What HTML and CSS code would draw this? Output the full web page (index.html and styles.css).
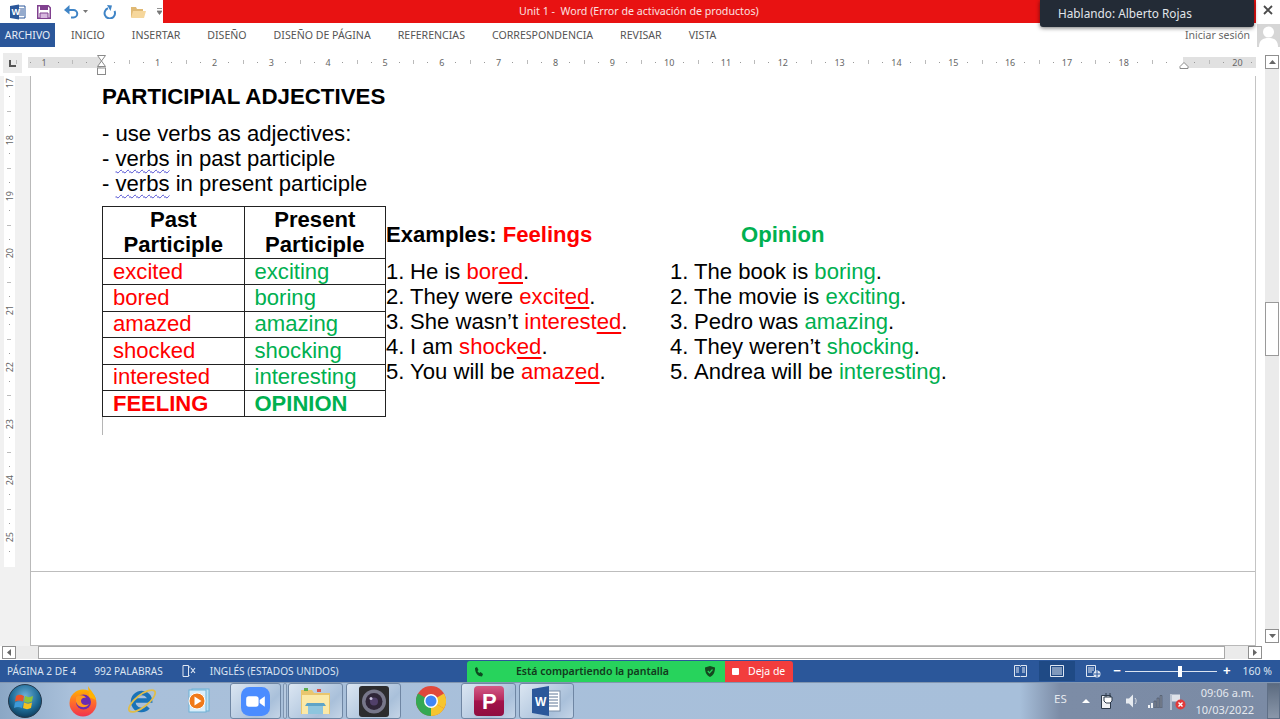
FILE: index.html
```html
<!DOCTYPE html>
<html lang="es">
<head>
<meta charset="utf-8">
<title>Unit 1 - Word</title>
<link rel="stylesheet" href="styles.css">
</head>
<body>
<div class="app">
  <header class="titlebar">
    <div class="qat">
      <svg class="qi q-word" width="16" height="16" viewBox="0 0 16 16"><path d="M7 2h8v12H7z" fill="#fff" stroke="#2b579a"/><path d="M9 5h5M9 7h5M9 9h5M9 11h5" stroke="#2b579a"/><path d="M0 2l9-1.500v15L0 14z" fill="#2b579a"/><text x="1.500" y="11" class="ico-w">W</text></svg>
      <svg class="qi q-save" width="14" height="14" viewBox="0 0 14 14"><path d="M.75.750h10.500l2 2v10.500H.75z" fill="#fff" stroke="#80408f" stroke-width="1.500"/><path d="M3 1v4h8V1z" fill="#80408f"/><path d="M3 8h8v5.500H3z" fill="#d7b8de" stroke="#80408f"/></svg>
      <svg class="qi q-undo" width="15" height="14" viewBox="0 0 15 14"><path d="M3 5h6.500a3.700 3.700 0 0 1 0 7.500H7" fill="none" stroke="#3f84c6" stroke-width="2"/><path d="M5.500 0v9.500L0 5z" fill="#3f84c6"/></svg>
      <svg class="qi q-drop" width="5" height="3" viewBox="0 0 5 3"><path d="M0 0h5L2.500 3z" fill="#777"/></svg>
      <svg class="qi q-redo" width="14" height="14" viewBox="0 0 14 14"><path d="M5 3.300A5.200 5.200 0 1 0 11.500 6" fill="none" stroke="#3f84c6" stroke-width="2"/><path d="M4 0l5 .5-1.500 5.500z" fill="#3f84c6"/></svg>
      <svg class="qi q-folder" width="16" height="14" viewBox="0 0 16 14"><path d="M1 2h5l1 2h6v8H1z" fill="#e0b974"/><path d="M3 6h13l-2 7H1z" fill="#f6d79c"/></svg>
      <svg class="qi q-custom" width="5" height="7" viewBox="0 0 5 7"><path d="M0 .5h5M0 3h5L2.500 6.500 0 3" fill="#777" stroke="#777" stroke-width=".8"/></svg>
    </div>
    <div class="redband"><span class="wintitle">Unit 1 -&nbsp; Word (Error de activación de productos)</span></div>
    <div class="closebox"><svg width="10" height="10" viewBox="0 0 10 10"><path d="M1 1l8 8M9 1l-8 8" stroke="#4a4a4a" stroke-width="1.800"/></svg></div>
  </header>

  <div class="speaker">Hablando: Alberto Rojas</div>

  <nav class="tabs">
    <span class="tab-file">ARCHIVO</span>
    <div class="tablist">
      <span>INICIO</span><span>INSERTAR</span><span>DISEÑO</span><span>DISEÑO DE PÁGINA</span><span>REFERENCIAS</span><span>CORRESPONDENCIA</span><span>REVISAR</span><span>VISTA</span>
    </div>
    <span class="signin">Iniciar sesión</span>
    <svg class="avatar" width="23" height="23" viewBox="0 0 23 23"><rect width="23" height="23" fill="#d6d6d6"/><circle cx="11.500" cy="8" r="5.500" fill="#fff"/><path d="M2 23c0-7 4-9 9.500-9s9.500 2 9.500 9z" fill="#fff"/></svg>
  </nav>

  <div class="work">
    <div class="workleft">
      <div class="rulerrow">
        <div class="corner"><svg width="7" height="7" viewBox="0 0 7 7"><path d="M1 0v6h6" fill="none" stroke="#555" stroke-width="2"/></svg></div>
        <div class="hruler">
          <div class="hcells">
            <span>1</span><span></span><span>1</span><span>2</span><span>3</span><span>4</span><span>5</span><span>6</span><span>7</span><span>8</span><span>9</span><span>10</span><span>11</span><span>12</span><span>13</span><span>14</span><span>15</span><span>16</span><span>17</span><span>18</span><span></span><span>20</span>
          </div>
          <svg class="indent" width="10" height="20" viewBox="0 0 10 20"><path d="M.5.500h8L4.500 6zM4.500 6l4 5.500h-8z" fill="#fff" stroke="#8a8a8a"/><rect x=".5" y="13" width="8" height="6.500" fill="#fff" stroke="#8a8a8a"/></svg>
          <svg class="rindent" width="10" height="7" viewBox="0 0 10 7"><path d="M5 .5l4 4v2H1v-2z" fill="#fff" stroke="#8a8a8a"/></svg>
        </div>
      </div>
      <div class="docrow">
        <div class="vcol">
          <div class="vruler">
            <span><b>17</b></span><span><b>18</b></span><span><b>19</b></span><span><b>20</b></span><span><b>21</b></span><span><b>22</b></span><span><b>23</b></span><span><b>24</b></span><span><b>25</b></span>
          </div>
        </div>
        <main class="doc">
          <section class="page">
            <h1 class="doc-title">PARTICIPIAL ADJECTIVES</h1>
            <ul class="intro">
              <li>- use verbs as adjectives:</li>
              <li>- <span class="spell">verbs</span> in past participle</li>
              <li>- <span class="spell">verbs</span> in present participle</li>
            </ul>
            <div class="lesson">
              <div class="tablewrap">
                <table class="ptable">
                  <tr class="thead"><th>Past<br>Participle</th><th>Present<br>Participle</th></tr>
                  <tr><td class="red">excited</td><td class="green">exciting</td></tr>
                  <tr><td class="red">bored</td><td class="green">boring</td></tr>
                  <tr><td class="red">amazed</td><td class="green">amazing</td></tr>
                  <tr><td class="red">shocked</td><td class="green">shocking</td></tr>
                  <tr><td class="red">interested</td><td class="green">interesting</td></tr>
                  <tr class="tfoot"><td class="red">FEELING</td><td class="green">OPINION</td></tr>
                </table>
                <div class="cellmark"></div>
              </div>
              <div class="examples">
                <div class="exhead">
                  <div class="excol"><b>Examples: <span class="red">Feelings</span></b></div>
                  <div class="excol opinion"><b class="green">Opinion</b></div>
                </div>
                <div class="exlists">
                  <ol class="excol">
                    <li><i>1.</i>He is <span class="red">bor<u>ed</u></span>.</li>
                    <li><i>2.</i>They were <span class="red">excit<u>ed</u></span>.</li>
                    <li><i>3.</i>She wasn’t <span class="red">interest<u>ed</u></span>.</li>
                    <li><i>4.</i>I am <span class="red">shock<u>ed</u></span>.</li>
                    <li><i>5.</i>You will be <span class="red">amaz<u>ed</u></span>.</li>
                  </ol>
                  <ol class="excol">
                    <li><i>1.</i>The book is <span class="green">boring</span>.</li>
                    <li><i>2.</i>The movie is <span class="green">exciting</span>.</li>
                    <li><i>3.</i>Pedro was <span class="green">amazing</span>.</li>
                    <li><i>4.</i>They weren’t <span class="green">shocking</span>.</li>
                    <li><i>5.</i>Andrea will be <span class="green">interesting</span>.</li>
                  </ol>
                </div>
              </div>
            </div>
          </section>
          <section class="page-next"></section>
        </main>
      </div>
    </div>
    <aside class="vscroll">
      <div class="sbtn"><svg width="7" height="4" viewBox="0 0 7 4"><path d="M3.500 0L7 4H0z" fill="#666"/></svg></div>
      <div class="vtrack"><div class="vthumb"></div></div>
      <div class="sbtn"><svg width="7" height="4" viewBox="0 0 7 4"><path d="M0 0h7L3.500 4z" fill="#666"/></svg></div>
    </aside>
  </div>

  <div class="hscroll">
    <div class="sbtn hb"><svg width="4" height="7" viewBox="0 0 4 7"><path d="M4 0v7L0 3.500z" fill="#666"/></svg></div>
    <div class="htrack"><div class="hthumb"></div></div>
    <div class="sbtn hb"><svg width="4" height="7" viewBox="0 0 4 7"><path d="M0 0v7l4-3.500z" fill="#666"/></svg></div>
  </div>

  <footer class="status">
    <span class="st1">PÁGINA 2 DE 4</span>
    <span class="st2">992 PALABRAS</span>
    <svg class="st-book" width="14" height="12" viewBox="0 0 14 12"><path d="M6.500.5H1v11h5.500zM6.500 2h2M6.500 10.500h1" fill="none" stroke="#dfe7f2"/><path d="M9 3l4 5M13 3L9 8" stroke="#dfe7f2" stroke-width="1.200"/></svg>
    <span class="st3">INGLÉS (ESTADOS UNIDOS)</span>
    <div class="st-right">
      <svg class="vw1" width="13" height="12" viewBox="0 0 13 12"><path d="M.5.5h5.500l.5 1 .5-1h5.500v11H7l-.5-.5-.5.500H.5z" fill="none" stroke="#dfe7f2"/><path d="M2 3h3M2 5h3M2 7h3M8 3h3M8 5h3M8 7h3" stroke="#dfe7f2"/></svg>
      <div class="vw2"><svg width="14" height="12" viewBox="0 0 14 12"><path d="M.5.500h13v11H.5z" fill="none" stroke="#dfe7f2"/><path d="M2 3h10M2 5h10M2 7h10M2 9h10" stroke="#dfe7f2"/></svg></div>
      <svg class="vw3" width="15" height="13" viewBox="0 0 15 13"><path d="M.5.500h9v11h-9z" fill="none" stroke="#dfe7f2"/><path d="M2 3h6M2 5h6M2 7h4" stroke="#dfe7f2"/><circle cx="11" cy="9" r="3.500" fill="#dfe7f2"/><path d="M8 9h6M11 6v6" stroke="#2b579a"/></svg>
      <div class="zoomctl">
        <span class="zm">−</span>
        <div class="slider"><b></b></div>
        <span class="zp">+</span>
      </div>
      <span class="zoomval">160 %</span>
    </div>
  </footer>

  <div class="sharebar">
    <div class="share-green">
      <svg width="9" height="10" viewBox="0 0 9 10"><path d="M1 1l2-1 1.500 3-1 1c.5 1 1 1.500 2 2l1-1 2.500 2-1 2.500C4 9.500 1 6 1 1z" fill="#0e4a20"/></svg>
      <span>Está compartiendo la pantalla</span>
      <svg width="10" height="11" viewBox="0 0 10 11"><path d="M5 0l5 1.500c0 5-1.500 7.500-5 9.500C1.500 9 0 6.500 0 1.500z" fill="#15481f"/><path d="M2.800 5l1.700 1.800L7.500 3.500" fill="none" stroke="#27d35c" stroke-width="1.200"/></svg>
    </div>
    <div class="share-red"><i></i><span>Deja de</span></div>
  </div>

  <div class="taskbar">
    <div class="tb-left">
      <svg class="orb" width="34" height="34" viewBox="0 0 34 34"><defs><radialGradient id="og" cx=".5" cy=".35" r=".7"><stop offset="0" stop-color="#6fb0d8"/><stop offset=".6" stop-color="#1d6a96"/><stop offset="1" stop-color="#0d3350"/></radialGradient></defs><circle cx="17" cy="17" r="16.500" fill="url(#og)" stroke="#25394d"/><path d="M8 12c3-2 5-1.500 8 0l-1 5.500c-3-1.500-5-1.500-8 0z" fill="#e8532b"/><path d="M17 12c3 1.500 5 1.500 8 0l-1 5.500c-3 1.500-5 1.500-8 0z" fill="#8fc33a"/><path d="M7 18.500c3-1.500 5-1.500 8 0l-1 5.500c-3-1.500-5-1.500-8 0z" fill="#3e9ad8"/><path d="M16 18.500c3 1.500 5 1.500 8 0l-1 5.500c-3 1.500-5 1.500-8 0z" fill="#f3c021"/></svg>
      <svg class="ti i-ff" width="30" height="32" viewBox="0 0 30 32"><defs><linearGradient id="ff" x1="0" y1="0" x2="0" y2="1"><stop offset="0" stop-color="#ffb200"/><stop offset=".5" stop-color="#ff6a2b"/><stop offset="1" stop-color="#f0324f"/></linearGradient></defs><circle cx="15" cy="18" r="13.500" fill="url(#ff)"/><path d="M20 1c2 4 7 8 8 14l-7-3z" fill="#ffb200"/><circle cx="15.500" cy="17" r="7.500" fill="#6a2bb0"/><path d="M8 12c4-3 9-2 10 1-3-1-5 1-5 3 0 4 5 5 8 3-3 5-11 4-13-2z" fill="#ff9a1f"/></svg>
      <svg class="ti i-ie" width="30" height="32" viewBox="0 0 30 32"><path d="M21 22a8.500 8.500 0 1 1 2-6.500H8" fill="none" stroke="#1a73b8" stroke-width="4.500"/><ellipse cx="15" cy="16" rx="16" ry="6" transform="rotate(-38 15 16)" fill="none" stroke="#e0bd4a" stroke-width="1.800"/></svg>
      <svg class="ti i-wmp" width="26" height="28" viewBox="0 0 26 28"><rect x="6" y="2" width="17" height="22" fill="#bfe0f2" stroke="#6fb2d6"/><rect x="3" y="3" width="17" height="22" fill="#d9eefa" stroke="#6fb2d6"/><circle cx="11" cy="14" r="8" fill="#f07a1a" stroke="#fff" stroke-width="1"/><path d="M8.500 9.500v9l7-4.500z" fill="#fff"/></svg>
    </div>
    <div class="tbtn b-zoom">
      <svg width="29" height="29" viewBox="0 0 28 28"><rect width="28" height="28" rx="8" fill="#4a8cff"/><rect x="5" y="9" width="12" height="10" rx="2.500" fill="#fff"/><path d="M18 12.500l5-3.500v10l-5-3.500z" fill="#fff"/></svg>
    </div>
    <div class="tsep"></div>
    <div class="tbtn b-exp">
      <svg width="31" height="30" viewBox="0 0 31 30"><path d="M1 4h11l2 3h16v21H1z" fill="#e9c66e"/><path d="M2 9h27v19H2z" fill="#fbe9a8"/><rect x="4" y="2" width="4" height="3" fill="#5cae52"/><rect x="17" y="3" width="4" height="3" fill="#d9534a"/><path d="M8 28v-9h15v9z" fill="#8ec5de"/><path d="M5 20h21l-2-3H7z" fill="#5ea4c7"/></svg>
    </div>
    <div class="tbtn b-cam">
      <svg width="30" height="31" viewBox="0 0 30 31"><rect width="30" height="31" rx="3" fill="#2c2c2e"/><circle cx="15" cy="15.500" r="12" fill="#77778a"/><circle cx="15" cy="15.500" r="8.500" fill="#2f2638"/><circle cx="15" cy="15.500" r="4" fill="#51406a"/><circle cx="12" cy="12.500" r="1.500" fill="#c9c3dd"/></svg>
    </div>
    <div class="tb-chrome">
      <svg width="30" height="30" viewBox="0 0 30 30"><circle cx="15" cy="15" r="15" fill="#e0483b"/><path d="M15 15L28 22.500A15 15 0 0 1 15 30z" fill="#f6c52f"/><path d="M15 15L15 30A15 15 0 0 1 2 7.500z" fill="#35a853"/><path d="M15 15L28 7.500A15 15 0 0 1 28 22.500z" fill="#f6c52f"/><circle cx="15" cy="15" r="7" fill="#fff"/><circle cx="15" cy="15" r="5.500" fill="#4286f5"/></svg>
    </div>
    <div class="tbtn b-p">
      <svg width="30" height="30" viewBox="0 0 30 30"><defs><linearGradient id="pg" x1="0" y1="0" x2="0" y2="1"><stop offset="0" stop-color="#d25a86"/><stop offset=".45" stop-color="#b72a5e"/><stop offset=".5" stop-color="#a3124a"/><stop offset="1" stop-color="#8f0e40"/></linearGradient></defs><rect width="30" height="30" rx="4" fill="url(#pg)"/><text x="8" y="23" class="ico-p">P</text></svg>
    </div>
    <div class="tbtn b-w">
      <svg width="29" height="30" viewBox="0 0 29 30"><rect x="13" y="5" width="15" height="20" fill="#fff" stroke="#7b8ea8"/><path d="M16 8h10M16 11h10M16 14h10M16 17h10M16 20h10" stroke="#5f7696"/><path d="M0 3l17-3v30L0 27z" fill="#2b579a"/><text x="3" y="20" class="ico-w2">W</text></svg>
    </div>
    <div class="tray">
      <span class="lang">ES</span>
      <svg class="tr-up" width="8" height="4" viewBox="0 0 8 4"><path d="M4 0l4 4H0z" fill="#fff"/></svg>
      <svg class="tr-plug" width="13" height="16" viewBox="0 0 13 16"><path d="M.5 2.500h9v13h-9z" fill="#f0f2f5" stroke="#2d3a4b"/><path d="M5 0v4M9 0v4M3 4h8v4l-2 2H5L3 8z" fill="#fff" stroke="#2d3a4b"/></svg>
      <svg class="tr-vol" width="13" height="14" viewBox="0 0 13 14"><path d="M0 4.500h3L7 .5v13L3 9.500H0z" fill="#e7ebf0"/><path d="M9 4c1.500 1.500 1.500 4.500 0 6" fill="none" stroke="#d9dee6"/></svg>
      <svg class="tr-net" width="16" height="13" viewBox="0 0 16 13"><path d="M1 10h2v3H1zM4 8h2v5H4z" fill="#f0f2f5"/><path d="M7 6h2v7H7zM10 3h2v10h-2zM13 .5h2V13h-2z" fill="#7d8796" stroke="#404a58" stroke-width=".5"/></svg>
      <svg class="tr-flag" width="16" height="17" viewBox="0 0 16 17"><path d="M1 1v16" stroke="#e7ebf0" stroke-width="1.200"/><path d="M2 1.500h8v7H2z" fill="#dfe3ea"/><circle cx="10.500" cy="11.500" r="5" fill="#e23a3a"/><path d="M8.500 9.500l4 4M12.500 9.500l-4 4" stroke="#fff" stroke-width="1.400"/></svg>
      <div class="clock"><span>09:06 a.m.</span><span>10/03/2022</span></div>
      <div class="showdesk"></div>
    </div>
  </div>
</div>
</body>
</html>
```
FILE: styles.css
```css
* { box-sizing: border-box; }
html, body { margin: 0; padding: 0; height: 100%; overflow: hidden; background: #fff; }
body { font-family: "Liberation Sans", Arial, sans-serif; }
.app { position: relative; width: 1280px; height: 719px; display: flex; flex-direction: column; overflow: hidden; }

/* Title bar */
.titlebar { display: flex; height: 23px; flex: none; background: #fff; }
.qat { width: 163px; flex: none; display: flex; align-items: center; padding-left: 10px; }
.qi { display: block; flex: none; }
.q-save { margin-left: 11px; }
.q-undo { margin-left: 13px; }
.q-drop { margin-left: 4px; }
.q-redo { margin-left: 15px; }
.q-folder { margin-left: 13px; }
.q-custom { margin-left: 11px; }
.ico-w { font: bold 9px "Liberation Sans", sans-serif; fill: #fff; }
.ico-w2 { font: bold 12px "Liberation Sans", sans-serif; fill: #fff; }
.ico-p { font: bold 22px "Liberation Sans", sans-serif; fill: #fff; }
.redband { width: 1093px; background: #e81212; padding-left: 356px; display: flex; align-items: center; }
.wintitle { font: 10.65px/1 "Noto Sans", sans-serif; color: #fbe0e0; white-space: nowrap; }
.closebox { flex: 1; display: flex; align-items: center; justify-content: center; padding-bottom: 3px; }
.speaker { position: absolute; left: 1040px; top: 0; width: 214px; height: 27px; background: #232b36; color: #e1e5ea; font: 11.8px/26px "Noto Sans", sans-serif; padding-left: 18px; border-radius: 0 0 3px 3px; box-shadow: 0 1px 4px rgba(0,0,0,.55); z-index: 5; }

/* Tabs */
.tabs { display: flex; height: 24px; flex: none; align-items: center; font: 10.6px/24px "Noto Sans", sans-serif; color: #555; }
.tab-file { width: 55px; height: 24px; background: #2b579a; color: #e8eef7; text-align: center; flex: none; font-size: 10.5px; }
.tablist { display: flex; gap: 27px; padding-left: 16px; flex: 1; white-space: nowrap; }
.signin { color: #666; margin-right: 7px; font-size: 10.5px; }
.avatar { display: block; flex: none; }

/* Work area */
.work { display: flex; height: 599px; flex: none; }
.workleft { width: 1265px; flex: none; display: flex; flex-direction: column; }
.rulerrow { height: 29px; flex: none; display: flex; padding-left: 3px; padding-top: 6px; }
.corner { width: 19px; height: 20px; background: #ebebeb; display: flex; align-items: center; justify-content: center; flex: none; }
.hruler { position: relative; width: 1228px; height: 11px; margin-left: 6px; margin-top: 4px; overflow: visible; background: linear-gradient(to right, #e1e1e1 73px, #fff 73px, #fff 1155px, #e1e1e1 1155px); }
.hcells { display: flex; margin-left: -12.4px; width: 1240px; overflow: hidden; height: 11px; }
.hcells span { width: 56.84px; flex: none; text-align: center; font: 9px/11px "Noto Sans", sans-serif; color: #666; background-image: linear-gradient(#999, #999), linear-gradient(#999, #999), linear-gradient(#bbb, #bbb); background-repeat: no-repeat; background-size: 1px 1px, 1px 1px, 1px 4px; background-position: 14px 5px, 42px 5px, 0 3px; }
.indent { position: absolute; left: 69px; top: -2px; }
.rindent { position: absolute; left: 1151px; top: 5px; }

.docrow { flex: 1; display: flex; min-height: 0; }
.vcol { width: 30px; flex: none; background: #f1f1f1; padding-left: 4px; }
.vruler { width: 11px; height: 491px; background: #fff; overflow: hidden; display: flex; flex-direction: column; }
.vruler span { flex: none; height: 56.84px; display: flex; align-items: center; justify-content: center; background-image: linear-gradient(#999, #999), linear-gradient(#999, #999), linear-gradient(#bbb, #bbb); background-repeat: no-repeat; background-size: 1px 1px, 1px 1px, 4px 1px; background-position: 5px 14px, 5px 42px, 3px 0; }
.vruler span:first-child { margin-top: -21.6px; }
.vruler b { font: 9px/11px "Noto Sans", sans-serif; color: #666; writing-mode: vertical-rl; transform: rotate(180deg); }

.doc { width: 1226px; flex: none; display: flex; flex-direction: column; border-left: 1px solid #b9b9b9; border-right: 1px solid #c4c4c4; border-bottom: 1px solid #b9b9b9; background: #fff; }
.page { height: 496px; flex: none; border-bottom: 1px solid #bdbdbd; padding: 8px 0 0 71px; color: #000; }
.page-next { flex: 1; }

.doc-title { margin: 0; font: bold 22.3px/25px "Liberation Sans", sans-serif; }
.intro { list-style: none; margin: 12px 0 0; padding: 0; font-size: 22.1px; line-height: 25px; }
.spell { text-decoration: underline wavy #4a4ad0 1px; text-underline-offset: 3px; }

.lesson { display: flex; margin-top: 10px; font-size: 22.1px; }
.tablewrap { width: 284px; flex: none; }
.ptable { border-collapse: collapse; table-layout: fixed; width: 283px; }
.ptable th, .ptable td { border: 1px solid #222; padding: 0; }
.ptable th { width: 141.5px; font-weight: bold; line-height: 25px; text-align: center; height: 52px; padding-bottom: 1px; }
.ptable td { height: 26.4px; line-height: 24px; padding-left: 10px; }
.tfoot td { font-weight: bold; font-size: 22px; line-height: 22px; }
.cellmark { width: 1px; height: 18px; background: #b5b5b5; }
.red { color: #f00; }
.green { color: #00b050; }

.examples { padding-top: 16px; flex: 1; }
.exhead { display: flex; line-height: 25px; }
.excol { width: 284px; flex: none; }
.opinion { padding-left: 71px; }
.exlists { display: flex; margin-top: 12px; }
.exlists ol { list-style: none; margin: 0; padding: 0; }
.exlists li { display: flex; line-height: 25px; white-space: pre-wrap; }
.exlists li i { font-style: normal; width: 24px; flex: none; }
.exlists u { text-decoration: underline #f00 1.500px; text-underline-offset: 3px; }

/* Scrollbars */
.vscroll { width: 14px; flex: none; display: flex; flex-direction: column; padding-top: 8px; padding-bottom: 3px; }
.sbtn { flex: none; width: 14px; height: 14px; background: #fff; border: 1px solid #8f8f8f; display: flex; align-items: center; justify-content: center; }
.vtrack { flex: 1; background: #ebebeb; padding-top: 233px; }
.vthumb { height: 54px; background: #fff; border: 1px solid #9a9a9a; }
.hscroll { height: 14px; flex: none; display: flex; padding-left: 2px; padding-right: 18px; }
.hscroll .hb { height: 13px; }
.htrack { flex: 1; background: #ebebeb; padding: 0 23px 0 22px; height: 13px; }
.hthumb { height: 13px; background: #fff; border: 1px solid #a8a8a8; }

/* Status bar */
.status { height: 22px; flex: none; background: #2b579a; display: flex; align-items: center; color: #dbe4f1; font: 10.1px/22px "Noto Sans", sans-serif; padding-left: 7px; white-space: nowrap; }
.st2 { margin-left: 18px; }
.st-book { margin-left: 19px; }
.st3 { margin-left: 14px; }
.st-right { margin-left: auto; display: flex; align-items: center; height: 22px; }
.vw2 { width: 36px; height: 20px; background: #1f4a85; margin-left: 12px; display: flex; align-items: center; justify-content: center; }
.vw3 { margin-left: 11px; }
.zoomctl { display: flex; align-items: center; margin-left: 12px; }
.zm, .zp { font: bold 13px/22px "Liberation Sans", sans-serif; color: #fff; }
.slider { position: relative; width: 92px; height: 1px; background: #dbe4f1; margin: 0 6px 0 4px; }
.slider b { position: absolute; left: 53px; top: -5px; width: 4px; height: 11px; background: #fff; }
.zoomval { margin-left: 12px; margin-right: 8px; font-size: 10.5px; }

.sharebar { position: absolute; left: 467px; top: 661px; display: flex; height: 21px; z-index: 4; font: 10.5px/21px "Noto Sans", sans-serif; }
.share-green { width: 258px; background: #27d35c; color: #123a1d; font-weight: 600; display: flex; align-items: center; padding: 0 10px 0 7px; border-radius: 3px 0 0 0; }
.share-green span { flex: 1; padding-left: 33px; white-space: nowrap; }
.share-red { width: 68px; background: #f23d3d; color: #fff; display: flex; align-items: center; padding-left: 7px; gap: 9px; border-radius: 0 3px 0 0; }
.share-red i { width: 7px; height: 7px; background: #fff; border-radius: 1px; }

/* Taskbar */
.taskbar { height: 37px; flex: none; display: flex; align-items: center; background: linear-gradient(to right, #8ba7c5 0, #a9c0da 70px, #a7bfda 1020px, #7c8ca6 1060px, #7b8ba5 1280px); border-top: 1px solid #8296b0; }
.tb-left { display: flex; align-items: center; width: 230px; flex: none; padding-left: 8px; }
.i-ff { margin-left: 26px; }
.i-ie { margin-left: 29px; }
.i-wmp { margin-left: 29px; }
.tbtn { width: 51px; height: 36px; flex: none; display: flex; align-items: center; justify-content: center; border: 1px solid #6f86a3; border-radius: 3px; background: linear-gradient(135deg, #dbe6f2, #a9c0da 70%, #c5d5e7); }
.b-exp, .b-cam, .b-p, .b-w { width: 55px; }
.tsep { width: 4px; height: 36px; margin: 0 1px 0 2px; border: 1px solid #7f95b1; border-radius: 2px; background: #b6c9df; flex: none; }
.b-cam { margin-left: 3px; }
.tb-chrome { width: 60px; flex: none; display: flex; justify-content: center; }
.b-w { margin-left: 3px; }
.tray { flex: 1; display: flex; align-items: center; color: #e4e8ee; font: 10px/14px "Noto Sans", sans-serif; padding-left: 480px; }
.lang { font-size: 11.5px; margin-bottom: 4px; width: 13px; flex: none; }
.tr-up { margin-left: 15px; }
.tr-plug { margin-left: 10.5px; }
.tr-vol { margin-left: 12px; }
.tr-net { margin-left: 8.5px; }
.tr-flag { margin-left: 7px; }
.clock { display: flex; flex-direction: column; align-items: flex-end; margin-left: 16px; width: 52px; font-size: 11px; line-height: 17px; white-space: nowrap; }
.showdesk { width: 13px; height: 36px; margin-left: 13px; border: 1px solid #5f6f86; background: linear-gradient(#5c6b80, #8a97aa); }
```
